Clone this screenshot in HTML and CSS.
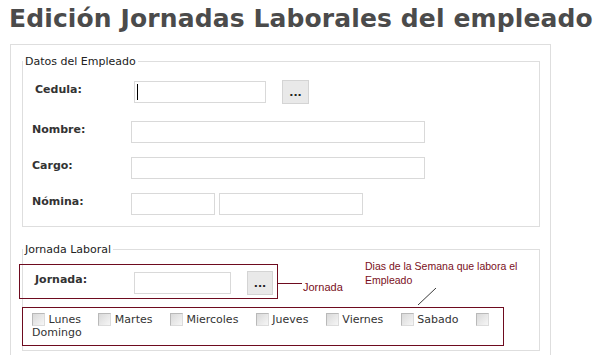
FILE: index.html
```html
<!DOCTYPE html>
<html lang="es">
<head>
  <meta charset="UTF-8" />
  <meta name="viewport" content="width=device-width, initial-scale=1.0"/>
  <title>Edición Jornadas Laborales del empleado</title>
  <link rel="stylesheet" href="styles.css">
</head>
<body>
  <h1 class="title">Edición Jornadas Laborales del empleado</h1>

  <div class="panel">
    <fieldset class="group">
      <legend>Datos del Empleado</legend>
      <div class="row row-first">
        <label class="lbl">Cedula:</label>
        <span class="caret-wrap"><input type="text" class="txt txt-cedula" /></span>
        <button type="button" class="btn">...</button>
      </div>
      <div class="row">
        <label class="lbl">Nombre:</label>
        <input type="text" class="txt txt-wide" />
      </div>
      <div class="row">
        <label class="lbl">Cargo:</label>
        <input type="text" class="txt txt-wide" />
      </div>
      <div class="row">
        <label class="lbl">Nómina:</label>
        <input type="text" class="txt txt-nom1" />
        <input type="text" class="txt txt-nom2" />
      </div>
    </fieldset>

    <fieldset class="group group-jornada">
      <legend>Jornada Laboral</legend>
      <div class="jornada-row">
        <label class="lbl">Jornada:</label>
        <input type="text" class="txt txt-jornada" />
        <button type="button" class="btn btn-small">...</button>
      </div>
      <div class="days">
        <span class="day"><span class="chk"></span> Lunes</span>
        <span class="day"><span class="chk"></span> Martes</span>
        <span class="day"><span class="chk"></span> Miercoles</span>
        <span class="day"><span class="chk"></span> Jueves</span>
        <span class="day"><span class="chk"></span> Viernes</span>
        <span class="day"><span class="chk"></span> Sabado</span>
        <span class="day"><span class="chk"></span> Domingo</span>
      </div>
    </fieldset>

    <!-- annotations drawn over the form -->
    <div class="note-line"></div>
    <div class="note note-jornada">Jornada</div>
    <div class="note note-dias">Dias de la Semana que labora el<br>Empleado</div>
    <svg class="note-slash" width="18" height="17" viewBox="0 0 18 17">
      <line x1="0" y1="17" x2="18" y2="0" stroke="#3a3a3a" stroke-width="1" />
    </svg>
  </div>
</body>
</html>
```

FILE: styles.css
```css
* {
  box-sizing: border-box;
}

body {
  margin: 0;
  padding: 4px 10px 0;
  background: #fff;
  font-family: "DejaVu Sans", sans-serif;
  font-size: 11px;
  color: #333;
}

.title {
  margin: 0 0 11px -1px;
  font-size: 25px;
  line-height: 29px;
  font-weight: bold;
  letter-spacing: 0.12px;
  color: #4b4b4b;
  white-space: nowrap;
}

.panel {
  position: relative;
  width: 541px;
  border: 1px solid #dedede;
  border-bottom: none;
  padding: 10px 10px 4px 11px;
}

.group {
  margin: 0;
  min-width: 0;
  border: 1px solid #dedede;
  padding: 6px 0 4px;
}

.group legend {
  padding: 0 2px;
  font-size: 11px;
  line-height: 13px;
  color: #222;
}

.group-jornada {
  margin-top: 16px;
  padding: 8px 0 4px;
}

.row {
  display: flex;
  align-items: center;
  height: 36px;
  padding-left: 9px;
}

.row-first {
  padding-left: 12px;
  margin-bottom: 4px;
}

.lbl {
  flex: none;
  width: 99px;
  margin-bottom: 6px;
  font-weight: bold;
  color: #333;
}

.txt {
  height: 22px;
  margin: 0;
  padding: 0 3px;
  border: 1px solid #d9d9d9;
  background: #fff;
  font: inherit;
}

.caret-wrap {
  position: relative;
  display: flex;
}

.caret-wrap::after {
  content: "";
  position: absolute;
  left: 3px;
  top: 3px;
  width: 1px;
  height: 16px;
  background: #000;
}

.txt-cedula {
  width: 132px;
}

.txt-wide {
  width: 294px;
}

.txt-nom1 {
  width: 84px;
  margin-right: 4px;
}

.txt-nom2 {
  width: 144px;
}

.txt-jornada {
  width: 97px;
}

.btn {
  width: 27px;
  height: 24px;
  margin-left: 16px;
  padding: 0;
  border: 1px solid #d4d4d4;
  background: #e9e9e9;
  font: bold 11px "DejaVu Sans", sans-serif;
  color: #222;
}

.btn-small {
  width: 26px;
}

.jornada-row {
  display: flex;
  align-items: center;
  width: 259px;
  margin-left: -4px;
  padding: 6px 4px 3px 15px;
  border: 1px solid #6e0b1f;
}

.jornada-row .lbl {
  margin-bottom: 8px;
}

.days {
  width: 482px;
  margin: 8px 0 0 -1px;
  padding: 5px 8px 6px 9px;
  border: 1px solid #6e0b1f;
  line-height: 13px;
  color: #333;
}

.day {
  margin-right: 14px;
}

.chk {
  display: inline-block;
  width: 13px;
  height: 13px;
  vertical-align: -3px;
  border: 1px solid;
  border-color: #b9b9b9 #dcdcdc #dcdcdc #b9b9b9;
  background: linear-gradient(135deg, #d9d9d9, #f6f6f6);
}

.note-line {
  position: absolute;
  left: 266px;
  top: 238px;
  width: 25px;
  height: 1px;
  background: #6e0b1f;
}

.note {
  position: absolute;
  font-family: "Liberation Sans", Arial, sans-serif;
  color: #7a1022;
}

.note-jornada {
  left: 292px;
  top: 236px;
  font-size: 11px;
  line-height: 12px;
}

.note-dias {
  left: 354px;
  top: 215px;
  font-size: 10.5px;
  line-height: 13.5px;
  white-space: nowrap;
}

.note-slash {
  position: absolute;
  left: 407px;
  top: 243px;
}
```
